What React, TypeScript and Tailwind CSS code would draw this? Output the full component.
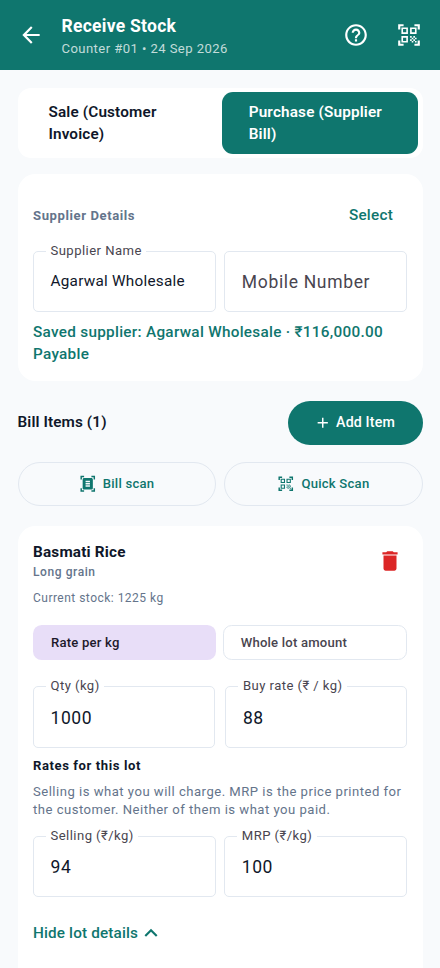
import type { ReactNode } from "react";
import {
  MdAdd,
  MdArrowBack,
  MdDelete,
  MdDocumentScanner,
  MdHelpOutline,
  MdKeyboardArrowUp,
  MdQrCodeScanner,
} from "react-icons/md";

interface FieldProps {
  label: string;
  value?: string;
  small?: boolean;
}

function Field({ label, value, small }: FieldProps) {
  return (
    <div className="relative flex h-[61.5px] min-w-0 flex-1 items-center rounded-[5px] border border-[#e2e8f0] pt-px pl-[16.5px]">
      {value ? (
        <>
          <span className="absolute -top-[10px] left-[12px] bg-white px-[4.5px] text-[13.1px] leading-[17.5px] tracking-[0.44px] whitespace-nowrap text-[#49454f]">
            {label}
          </span>
          <span
            className={
              small
                ? "text-[15.3px] tracking-[0.25px] text-[#0f172a]"
                : "text-[17.5px] tracking-[0.55px] text-[#0f172a]"
            }
          >
            {value}
          </span>
        </>
      ) : (
        <span className="text-[17.5px] tracking-[0.66px] text-[#49454f]">{label}</span>
      )}
    </div>
  );
}

function ScanButton({ icon, children }: { icon: ReactNode; children: ReactNode }) {
  return (
    <button className="flex h-11 flex-1 items-center justify-center gap-[6.5px] rounded-full border border-[#e2e8f0] text-[13.1px] font-medium tracking-[0.24px] text-[#0f766e]">
      {icon}
      {children}
    </button>
  );
}

function Header() {
  return (
    <header className="flex h-[70.4px] items-center bg-[#0f766e] pr-[18px] pl-[18px] text-white">
      <MdArrowBack size={26} />
      <div className="ml-[17.5px] flex-1">
        <h1 className="text-[17.5px] leading-[26px] font-bold tracking-[0.27px]">Receive Stock</h1>
        <p className="pt-px text-[13.1px] leading-[17.5px] tracking-[0.42px] text-white/75">
          Counter #01 • 24 Sep 2026
        </p>
      </div>
      <MdHelpOutline size={26} />
      <MdQrCodeScanner size={26} className="ml-[27px]" />
    </header>
  );
}

function SupplierCard() {
  return (
    <section className="mt-4 h-[206.5px] rounded-[17.5px] bg-white px-[15.5px] pt-[15.3px]">
      <div className="flex h-[52.5px] items-center justify-between pr-[14px]">
        <h2 className="text-[13.1px] font-bold tracking-[0.58px] text-[#64748b]">Supplier Details</h2>
        <button className="text-[15.3px] font-medium tracking-[0.24px] text-[#0f766e]">Select</button>
      </div>
      <div className="mt-[8.8px] flex gap-[8.7px]">
        <Field label="Supplier Name" value="Agarwal Wholesale" small />
        <Field label="Mobile Number" />
      </div>
      <p className="mt-[8.6px] text-[15.3px] leading-[22px] font-medium tracking-[0.29px] text-[#0f766e]">
        Saved supplier: Agarwal Wholesale · ₹116,000.00 Payable
      </p>
    </section>
  );
}

function ItemCard() {
  return (
    <section className="mt-5 h-[500px] rounded-t-[17.5px] bg-white px-[15.5px] pt-[15.3px]">
      <div className="flex items-center justify-between">
        <div>
          <h3 className="text-[15.3px] leading-[22px] font-bold tracking-[0.2px]">Basmati Rice</h3>
          <p className="text-[12px] leading-[18px] font-medium tracking-[0.58px] text-[#64748b]">
            Long grain
          </p>
        </div>
        <MdDelete size={26} className="mr-[4.5px] text-[#dc2626]" />
      </div>
      <p className="mt-[8.7px] text-[12px] leading-[17.5px] tracking-[0.48px] text-[#64748b]">
        Current stock: 1225 kg
      </p>
      <div className="mt-[17.5px] flex gap-[6.5px]">
        <div className="flex h-[35px] flex-1 items-center rounded-[8.7px] bg-[#e8def8] pl-[18px] text-[13.1px] font-medium tracking-[0.2px] text-[#1d192b]">
          Rate per kg
        </div>
        <div className="flex h-[35px] flex-1 items-center rounded-[8.7px] border border-[#e2e8f0] pl-[17px] text-[13.1px] font-medium tracking-[0.2px] text-[#49454f]">
          Whole lot amount
        </div>
      </div>
      <div className="mt-[26.4px] flex gap-[10.9px]">
        <Field label="Qty (kg)" value="1000" />
        <Field label="Buy rate (₹ / kg)" value="88" />
      </div>
      <h4 className="mt-[8.7px] text-[13.1px] leading-[17.5px] font-bold tracking-[0.58px]">
        Rates for this lot
      </h4>
      <p className="mt-[9px] text-[13.1px] leading-[17.5px] tracking-[0.49px] text-[#64748b]">
        Selling is what you will charge. MRP is the price printed for the customer. Neither of them
        is what you paid.
      </p>
      <div className="mt-[17.6px] flex gap-[8.7px]">
        <Field label="Selling (₹/kg)" value="94" />
        <Field label="MRP (₹/kg)" value="100" />
      </div>
      <button className="mt-[24.4px] flex items-center text-[15.3px] leading-[22px] font-medium tracking-[0.15px] text-[#0f766e]">
        Hide lot details
        <MdKeyboardArrowUp size={26} className="-my-1" />
      </button>
    </section>
  );
}

export default function App() {
  return (
    <div className="h-[968px] w-[440px] overflow-hidden bg-[#f8fafc] font-[Roboto,sans-serif] text-[#0f172a]">
      <Header />
      <main className="px-[17.5px] pt-[17.5px]">
        <div className="flex gap-[4.4px] rounded-[13px] bg-white p-[4.4px] text-[15.3px] leading-[22px] font-semibold tracking-[0.16px]">
          <div className="flex-1 px-[26.5px] py-[8.7px]">Sale (Customer Invoice)</div>
          <div className="flex-1 rounded-[11px] bg-[#0f766e] px-[26.5px] py-[8.7px] text-white">
            Purchase (Supplier Bill)
          </div>
        </div>

        <SupplierCard />

        <div className="mt-5 flex items-center justify-between">
          <h2 className="text-[15.3px] font-semibold tracking-[0.11px]">Bill Items (1)</h2>
          <button className="flex h-[44px] w-[134.5px] items-center justify-center gap-[5px] rounded-full bg-[#0f766e] pr-[2px] text-[14.2px] font-medium tracking-[0.15px] text-white">
            <MdAdd size={17.5} />
            Add Item
          </button>
        </div>

        <div className="mt-[17.5px] flex gap-[8.7px]">
          <ScanButton icon={<MdDocumentScanner size={17.5} />}>Bill scan</ScanButton>
          <ScanButton icon={<MdQrCodeScanner size={17.5} />}>Quick Scan</ScanButton>
        </div>

        <ItemCard />
      </main>
    </div>
  );
}
